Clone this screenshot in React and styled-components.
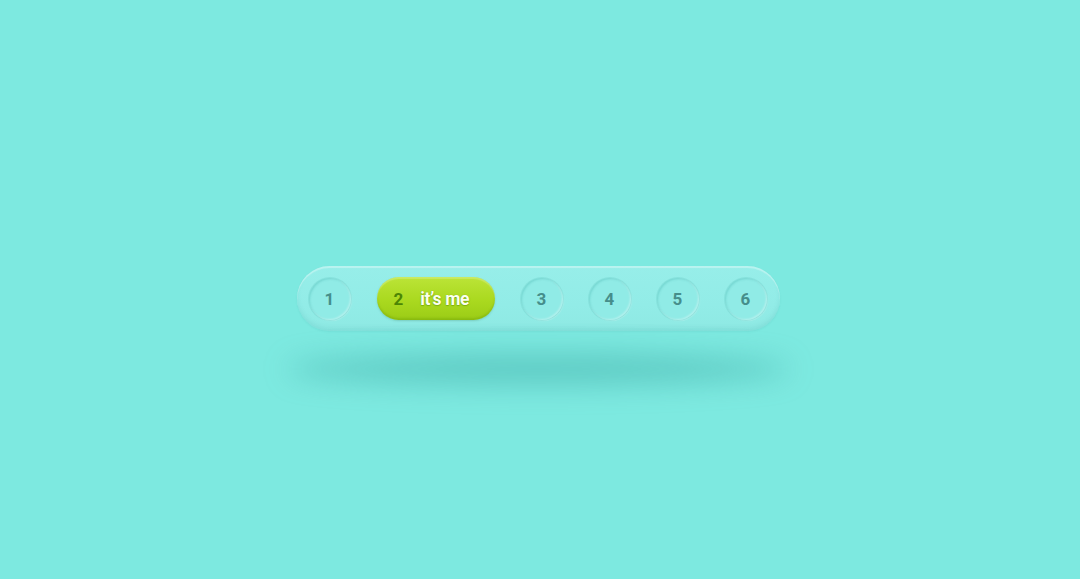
import styled, { createGlobalStyle } from "styled-components";

const GlobalStyle = createGlobalStyle`
  html, body {
    margin: 0;
    padding: 0;
    background: #7de9e0;
    font-family: Roboto, "Liberation Sans", sans-serif;
  }
`;

const Page = styled.div`
  min-height: 100vh;
  display: flex;
  align-items: center;
  justify-content: center;
  padding-top: 18px;
  padding-right: 4px;
  box-sizing: border-box;
`;

const Bar = styled.nav`
  position: relative;
  isolation: isolate;
  display: flex;
  align-items: center;
  gap: 26px;
  height: 65px;
  padding: 0 13px 0 12px;
  box-sizing: border-box;
  border-radius: 33px;
  background: linear-gradient(180deg, #97eee9 0%, #92ece7 60%, #8ee9e3 100%);
  box-shadow: inset 0 2px 1px rgba(255, 255, 255, 0.35),
    inset 0 -3px 4px rgba(60, 170, 165, 0.16),
    0 1px 2px rgba(60, 160, 155, 0.12);

  &::after {
    content: "";
    position: absolute;
    left: -10px;
    right: -10px;
    top: 88px;
    height: 30px;
    border-radius: 50%;
    background: rgba(45, 155, 150, 0.4);
    filter: blur(14px);
    z-index: -1;
  }
`;

const Dot = styled.button`
  width: 42px;
  height: 42px;
  flex: none;
  border-radius: 50%;
  border: none;
  padding: 0;
  background: #90ebe6;
  box-shadow: inset 1px 1px 2px rgba(60, 170, 165, 0.3),
    inset -1px -1px 2px rgba(255, 255, 255, 0.35),
    0 0 0 1px rgba(120, 215, 210, 0.5),
    1px 1px 1px rgba(255, 255, 255, 0.3);
  color: #468e8b;
  font-family: Roboto, "Liberation Sans", sans-serif;
  font-weight: 700;
  font-size: 17px;
  line-height: 42px;
  cursor: pointer;
`;

const Active = styled.button`
  display: flex;
  align-items: center;
  gap: 17px;
  width: 118px;
  height: 43px;
  flex: none;
  box-sizing: border-box;
  padding: 0 0 0 17px;
  border: none;
  border-radius: 22px;
  background: linear-gradient(180deg, #bbe437 0%, #aad91f 55%, #9bcc16 100%);
  box-shadow: inset 0 2px 1px rgba(255, 255, 255, 0.22),
    inset 0 -2px 2px rgba(100, 150, 0, 0.3),
    0 1px 2px rgba(80, 150, 120, 0.35);
  font-family: Roboto, "Liberation Sans", sans-serif;
  font-weight: 700;
  font-size: 17px;
  cursor: pointer;
`;

const Num = styled.span`
  color: #4c8604;
`;

const Label = styled.span`
  font-size: 17.5px;
  color: #fbffee;
  text-shadow: 0 0 1px rgba(90, 140, 0, 0.6), 0 1px 1px rgba(90, 140, 0, 0.5);
  letter-spacing: -0.3px;
`;

const pages = [1, 2, 3, 4, 5, 6];

export default function App() {
  const current = 2;
  return (
    <>
      <GlobalStyle />
      <Page>
        <Bar>
          {pages.map((p) =>
            p === current ? (
              <Active key={p}>
                <Num>{p}</Num>
                <Label>it’s me</Label>
              </Active>
            ) : (
              <Dot key={p}>{p}</Dot>
            )
          )}
        </Bar>
      </Page>
    </>
  );
}
